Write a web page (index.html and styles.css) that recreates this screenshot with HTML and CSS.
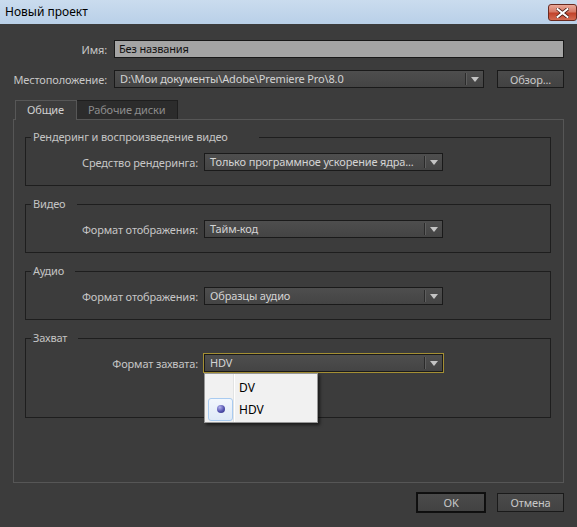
FILE: index.html
```html
<!DOCTYPE html>
<html lang="ru">
<head>
<meta charset="utf-8">
<title>Новый проект</title>
<link rel="stylesheet" href="styles.css">
</head>
<body>
<div class="titlebar">
  <span class="title">Новый проект</span>
  <div class="close">
    <svg width="13" height="10" viewBox="0 0 13 10"><path d="M1.5 1 L11.5 9 M11.5 1 L1.5 9" stroke="#4a1a12" stroke-width="3.6" stroke-linecap="square"/><path d="M1.5 1 L11.5 9 M11.5 1 L1.5 9" stroke="#ffffff" stroke-width="2" stroke-linecap="square"/></svg>
  </div>
</div>
<div class="main">
  <div class="row">
    <span class="lbl">Имя:</span>
    <div class="textfield">Без названия</div>
  </div>
  <div class="row row2">
    <span class="lbl">Местоположение:</span>
    <div class="select wide"><span class="val">D:\Мои документы\Adobe\Premiere Pro\8.0</span><span class="arrow"></span></div>
    <button class="btn browse">Обзор...</button>
  </div>
  <div class="tabs">
    <div class="tab active">Общие</div>
    <div class="tab inactive">Рабочие диски</div>
  </div>
  <div class="panel">
    <fieldset class="group">
      <legend class="legend legend-long">Рендеринг и воспроизведение видео</legend>
      <div class="grow">
        <span class="glbl">Средство рендеринга:</span>
        <div class="select gsel"><span class="val">Только программное ускорение ядра...</span><span class="arrow"></span></div>
      </div>
    </fieldset>
    <fieldset class="group">
      <legend class="legend">Видео</legend>
      <div class="grow">
        <span class="glbl">Формат отображения:</span>
        <div class="select gsel"><span class="val">Тайм-код</span><span class="arrow"></span></div>
      </div>
    </fieldset>
    <fieldset class="group">
      <legend class="legend">Аудио</legend>
      <div class="grow">
        <span class="glbl">Формат отображения:</span>
        <div class="select gsel"><span class="val">Образцы аудио</span><span class="arrow"></span></div>
      </div>
    </fieldset>
    <fieldset class="group group-capture">
      <legend class="legend">Захват</legend>
      <div class="grow">
        <span class="glbl">Формат захвата:</span>
        <div class="select gsel focused"><span class="val">HDV</span><span class="arrow"></span>
          <div class="popup">
            <div class="item"><span class="check"></span><span class="itext">DV</span></div>
            <div class="item"><span class="check checked"><span class="dot"></span></span><span class="itext">HDV</span></div>
          </div>
        </div>
      </div>
    </fieldset>
  </div>
  <div class="buttons">
    <button class="btn ok">OK</button>
    <button class="btn cancel">Отмена</button>
  </div>
</div>
</body>
</html>
```

FILE: styles.css
```css
* { box-sizing: border-box; }
html, body { margin: 0; padding: 0; }
body {
  width: 577px;
  height: 527px;
  overflow: hidden;
  background: #3c3c3c;
  font-family: "Noto Sans", "Open Sans", sans-serif;
  font-size: 11px;
  letter-spacing: -0.15px;
  color: #c6c6c6;
}
.titlebar {
  height: 24px;
  background: linear-gradient(to bottom, #cadcee, #b9d0e8);
  display: flex;
  justify-content: space-between;
  align-items: flex-start;
  letter-spacing: 0;
}
.title {
  font-size: 12px;
  color: #000;
  padding: 4px 0 0 5px;
  line-height: 16px;
}
.close {
  width: 29px;
  height: 17px;
  margin-top: 4px;
  border: 1px solid #6a2a20;
  border-radius: 3px;
  background: linear-gradient(to bottom, #e9a899 0%, #d67966 45%, #c2432b 55%, #d36b52 100%);
  display: flex;
  align-items: center;
  justify-content: center;
}
.main {
  padding: 16px 13px 0 13px;
}
.row {
  display: flex;
  align-items: center;
  height: 18px;
}
.row2 { margin-top: 12px; }
.lbl {
  width: 94px;
  text-align: right;
  margin-right: 7px;
  white-space: nowrap;
}
.textfield {
  flex: 1;
  height: 18px;
  background: #a4a4a4;
  border: 1px solid #181818;
  color: #111;
  padding-left: 4px;
  line-height: 16px;
}
.select {
  position: relative;
  height: 18px;
  border: 1px solid #1a1a1a;
  background: linear-gradient(to bottom, #4e4e4e, #444444);
  display: flex;
  align-items: center;
  color: #d4d4d4;
}
.select .val {
  flex: 1;
  padding-left: 5px;
  white-space: nowrap;
  overflow: hidden;
  line-height: 16px;
}
.select .arrow {
  width: 18px;
  height: 12px;
  border-left: 1px solid #2a2a2a;
  box-shadow: inset 1px 0 #5e5e5e;
  display: flex;
  align-items: center;
  justify-content: center;
}
.select .arrow::after {
  content: "";
  border-left: 4px solid transparent;
  border-right: 4px solid transparent;
  border-top: 5px solid #c4c4c4;
}
.wide { width: 370px; }
.btn {
  font: inherit;
  letter-spacing: inherit;
  color: #c8c8c8;
  background: linear-gradient(to bottom, #4b4b4b, #424242);
  border: 1px solid #1a1a1a;
  height: 18px;
  width: 67px;
  padding: 0;
}
.browse { margin-left: 13px; }
.tabs {
  display: flex;
  margin-top: 12px;
  padding-left: 2px;
  height: 19px;
  position: relative;
  z-index: 1;
}
.tab {
  height: 19px;
  line-height: 18px;
  padding-left: 11px;
}
.tab.active {
  width: 62px;
  background: #3c3c3c;
  border: 1px solid #575757;
  border-bottom: none;
  height: 20px;
  color: #d0d0d0;
}
.tab.inactive {
  width: 101px;
  background: #2c2c2c;
  border: 1px solid #1e1e1e;
  border-left: none;
  border-bottom: none;
  color: #8c8c8c;
}
.panel {
  height: 364px;
  border: 1px solid #565656;
  padding: 10px 12px 0 11px;
}
.group {
  margin: 0;
  padding: 9px 0 14px 0;
  border: 1px solid #1e1e1e;
  min-width: 0;
}
.group + .group { margin-top: 11px; }
.legend {
  margin-left: 5px;
  padding: 0 11px 0 2px;
  line-height: 14px;
  color: #c4c4c4;
}
.legend-long { padding-right: 31px; }
.group-capture { padding-bottom: 45px; }
.grow {
  display: flex;
  align-items: center;
}
.glbl {
  width: 172px;
  text-align: right;
  margin-right: 6px;
  white-space: nowrap;
}
.gsel { width: 239px; }
.focused {
  box-shadow: 0 0 0 1px #a48f34;
}
.popup {
  position: absolute;
  left: -1px;
  top: 18px;
  width: 114px;
  height: 50px;
  background: linear-gradient(to right, #f1f1f1 28px, #e2e3e3 28px, #e2e3e3 29px, #ffffff 29px, #ffffff 30px, #f1f1f1 30px);
  border: 1px solid #979797;
  box-shadow: 2px 2px 3px rgba(0, 0, 0, 0.55);
  color: #000;
  font-size: 12px;
  letter-spacing: 0;
  padding: 2px 0 0 3px;
  z-index: 5;
}
.item {
  display: flex;
  align-items: center;
  height: 22px;
}
.check {
  width: 25px;
  height: 22px;
  margin-right: 6px;
  display: flex;
  align-items: center;
  justify-content: center;
}
.check.checked {
  height: 23px;
  border: 1px solid #a9cbf0;
  border-radius: 3px;
  background: linear-gradient(to bottom, #f2f7fd, #dfeaf7);
}
.dot {
  width: 8px;
  height: 8px;
  border-radius: 50%;
  background: radial-gradient(circle at 35% 30%, #b4b4ee, #5454b0 55%, #2e2e7c);
}
.buttons {
  display: flex;
  justify-content: flex-end;
  gap: 12px;
  margin-top: 10px;
}
.ok {
  width: 68px;
  height: 19px;
  border-color: #0e0e0e;
  box-shadow: 0 0 0 1px #101010;
}
.cancel { height: 19px; }
```
